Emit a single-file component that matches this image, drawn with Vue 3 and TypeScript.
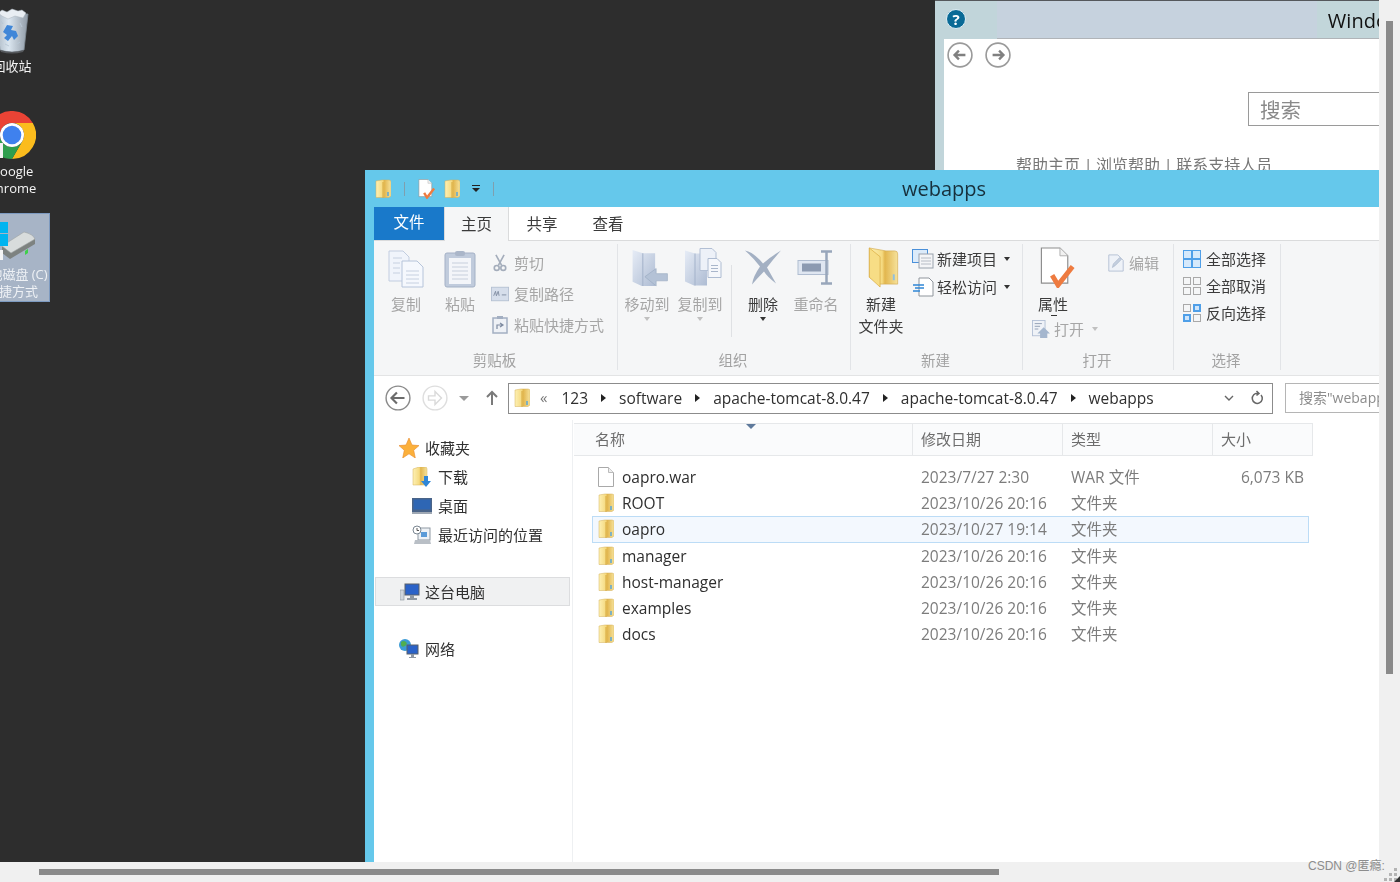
<script setup lang="ts">
interface FileRow {
  name: string
  icon: string
  date: string
  type: string
  size?: string
  selected?: boolean
}

const files: FileRow[] = [
  { name: 'oapro.war', icon: 'blank', date: '2023/7/27 2:30', type: 'WAR 文件', size: '6,073 KB' },
  { name: 'ROOT', icon: 'folder', date: '2023/10/26 20:16', type: '文件夹' },
  { name: 'oapro', icon: 'folder', date: '2023/10/27 19:14', type: '文件夹', selected: true },
  { name: 'manager', icon: 'folder', date: '2023/10/26 20:16', type: '文件夹' },
  { name: 'host-manager', icon: 'folder', date: '2023/10/26 20:16', type: '文件夹' },
  { name: 'examples', icon: 'folder', date: '2023/10/26 20:16', type: '文件夹' },
  { name: 'docs', icon: 'folder', date: '2023/10/26 20:16', type: '文件夹' },
]

const crumbs = ['123', 'software', 'apache-tomcat-8.0.47', 'apache-tomcat-8.0.47', 'webapps']
const favourites = [
  { label: '下载', icon: 'download' },
  { label: '桌面', icon: 'desktop' },
  { label: '最近访问的位置', icon: 'recent' },
]
const columns = ['名称', '修改日期', '类型', '大小']
</script>

<template>
  <div class="viewer">
    <svg class="sprites" width="0" height="0" aria-hidden="true">
      <defs>
        <linearGradient id="fold" x1="0" x2="1" y1="0" y2="0">
          <stop offset="0" stop-color="#fdf0b4" />
          <stop offset=".45" stop-color="#f5da80" />
          <stop offset=".55" stop-color="#e2b64e" />
          <stop offset="1" stop-color="#f6e29b" />
        </linearGradient>
        <linearGradient id="ghost" x1="0" x2="1" y1="0" y2="1">
          <stop offset="0" stop-color="#e6ecf6" />
          <stop offset="1" stop-color="#aebcd3" />
        </linearGradient>
        <linearGradient id="binbody" x1="0" x2="1" y1="0" y2="0">
          <stop offset="0" stop-color="#aab6c2" />
          <stop offset=".4" stop-color="#dbe6f0" />
          <stop offset="1" stop-color="#8f9aa6" />
        </linearGradient>
        <symbol id="folder" viewBox="0 0 16 20">
          <path d="M1 2 7 1h7q2 0 2 2v14l-2 1.500H1z" fill="url(#fold)" stroke="#d5b15a" stroke-width=".5" />
          <path d="M8 3v16" stroke="#d6a83f" stroke-width="1" />
          <path d="M13 13v4" stroke="#5aa7d8" stroke-width="1.500" />
        </symbol>
        <symbol id="blank" viewBox="0 0 16 20">
          <path d="M.5.5h10l5 5v14H.500z" fill="#fff" stroke="#a9a9a9" />
          <path d="M10.500.5v5h5" fill="#eee" stroke="#bbb" />
        </symbol>
        <symbol id="download" viewBox="0 0 18 20">
          <path d="M0 2 6 0h6q2 0 2 2v14l-2 2H0z" fill="url(#fold)" stroke="#d5b15a" stroke-width=".5" />
          <path d="M11 9h4v5h3l-5 6-5-6h3z" fill="#2f86d6" />
        </symbol>
        <symbol id="desktop" viewBox="0 0 20 20">
          <rect y="2" width="20" height="14" fill="#4a6488" />
          <rect x="1.500" y="3.500" width="17" height="10" fill="#2e66b4" />
          <rect y="16" width="20" height="2" fill="#9fa8b4" />
        </symbol>
        <symbol id="recent" viewBox="0 0 20 20">
          <rect x="6" y="3" width="12" height="12" fill="#eef2f6" stroke="#8f99a3" />
          <circle cx="5" cy="5" r="4" fill="#fff" stroke="#7b8792" />
          <path d="M5 3v2.500h2" stroke="#555" fill="none" />
          <rect x="9" y="7" width="6" height="5" fill="#5b9bd8" />
          <path d="M3 15h15l1 4H2z" fill="#b9bfc6" />
        </symbol>
        <symbol id="pc" viewBox="0 0 20 18">
          <rect x="0" y="7" width="4" height="10" fill="#d0d6dc" stroke="#8b949c" stroke-width=".6" />
          <rect x="5" y="1" width="14" height="11" fill="#2a62c8" stroke="#59606a" />
          <path d="M10 12h4v3h3v2H7v-2h3z" fill="#8f98a2" />
        </symbol>
        <symbol id="net" viewBox="0 0 20 20">
          <circle cx="6" cy="6" r="6" fill="#3c9bd6" />
          <path d="M2 3q3-2 5 0t-1 4-4-1zM8 9l3 1-1 2z" fill="#4fae50" />
          <rect x="8" y="6" width="11" height="9" fill="#2a62c8" stroke="#59606a" />
          <path d="M12 15h3v3h2v1h-7v-1h2z" fill="#8f98a2" />
        </symbol>
        <symbol id="copy" viewBox="0 0 36 38">
          <path d="M1 1h14l6 6v24H1z" fill="#f0f4fb" stroke="#c2cde0" />
          <path d="M14 11h15l6 6v20H14z" fill="#f5f8fd" stroke="#b6c4da" />
          <path d="M5 8h9M5 13h7M5 18h7M5 23h7M18 21h13M18 25h13M18 29h13M18 33h13" stroke="#c6d0e0" />
        </symbol>
        <symbol id="paste" viewBox="0 0 32 38">
          <rect x="1" y="3" width="30" height="34" rx="2" fill="#c0cbdc" stroke="#a4b1c6" />
          <rect x="5" y="8" width="22" height="26" fill="#f3f5f9" />
          <path d="M8 13h16M8 17h16M8 21h16M8 25h16M8 29h16" stroke="#c7cfdc" />
          <rect x="11" y="1" width="10" height="5" rx="2" fill="#aab6c9" />
        </symbol>
        <symbol id="cut" viewBox="0 0 16 22">
          <path d="M3 1l7 13M13 1 6 14" stroke="#a4adbb" stroke-width="2" fill="none" />
          <circle cx="4" cy="17" r="3" fill="none" stroke="#a4adbb" stroke-width="2" />
          <circle cx="12" cy="17" r="3" fill="none" stroke="#a4adbb" stroke-width="2" />
        </symbol>
        <symbol id="path" viewBox="0 0 20 16">
          <rect x=".5" y=".5" width="19" height="15" fill="#d6deeb" stroke="#b4c0d2" />
          <path d="M3 10l2-5 1 5 2-5 1 5M12 9h5" stroke="#7f8ba0" fill="none" />
        </symbol>
        <symbol id="short" viewBox="0 0 16 18">
          <rect x="1" y="2" width="14" height="15" fill="#eef1f6" stroke="#a3afc2" stroke-width="1.500" />
          <rect x="5" y="0" width="6" height="3" fill="#a3afc2" />
          <path d="M5 13V9h5M8 7l3 2-3 2" stroke="#7d8aa0" fill="none" stroke-width="1.200" />
        </symbol>
        <symbol id="move" viewBox="0 0 36 40">
          <path d="M1 3l10 3h12v32H10L1 34z" fill="url(#ghost)" />
          <path d="M11 6v32" stroke="#a3b2ca" />
          <path d="M35 26H24v-5L13 29l11 9v-5h11z" fill="#b4c2d6" stroke="#98a8c0" stroke-width=".6" />
        </symbol>
        <symbol id="copyto" viewBox="0 0 38 40">
          <path d="M1 3l10 3h12v32H10L1 34z" fill="url(#ghost)" />
          <path d="M11 6v32" stroke="#a3b2ca" />
          <path d="M16 1h12l4 4v18H16z" fill="#edf1f8" stroke="#b2bfd4" />
          <path d="M24 11h9l4 4v15H24z" fill="#f5f7fb" stroke="#aebcd2" />
          <path d="M27 18h7M27 21h7M27 24h7" stroke="#a9b6cb" />
        </symbol>
        <symbol id="del" viewBox="0 0 38 36">
          <path d="M1 1q9 2 18 13Q27 7 37 1 29 10 23 18q4 7 9 16-9-7-12-12Q14 28 8 35q1-8 8-18Q9 8 1 1z" fill="#a3b0c3" />
        </symbol>
        <symbol id="rename" viewBox="0 0 38 34">
          <rect x="1" y="10" width="30" height="14" fill="#dfe6f1" stroke="#b0bdd1" />
          <rect x="5" y="13" width="19" height="8" fill="#8c9ab1" />
          <path d="M24 1h11M24 33h11M29.500 1v32" stroke="#98a6bb" stroke-width="2.500" />
        </symbol>
        <symbol id="newfolder" viewBox="0 0 32 42">
          <path d="M1 1l17 3h9q3 0 3 3v31H12L1 31z" fill="url(#fold)" stroke="#d4ad52" stroke-width=".7" />
          <path d="M12 10 1 1v30l11 10z" fill="#f7dd85" stroke="#d9a93e" stroke-width=".7" />
          <path d="M26 28v6" stroke="#8fbfe0" stroke-width="2" />
        </symbol>
        <symbol id="newitem" viewBox="0 0 22 20">
          <rect x=".5" y=".5" width="15" height="13" fill="#dcebfa" stroke="#4a90d9" />
          <rect x="7" y="5" width="14" height="14" fill="#f4f5f7" stroke="#9aa2ad" />
          <path d="M9 9h10M9 12h10M9 15h10" stroke="#b6bcc5" />
        </symbol>
        <symbol id="easy" viewBox="0 0 22 20">
          <path d="M7 1h10l4 4v14H7z" fill="#fff" stroke="#8f959c" />
          <path d="M1 8h11M3 11h9M1 14h7" stroke="#2f86d6" stroke-width="1.600" />
        </symbol>
        <symbol id="props" viewBox="0 0 36 42">
          <path d="M1 1h19l8 8v28H1z" fill="#fff" stroke="#8e8e8e" stroke-width="1.200" />
          <path d="M20 1v8h8" fill="#f1f1f1" stroke="#b0b0b0" />
          <path d="M12 29l6 10L33 20" fill="none" stroke="#ee7b40" stroke-width="5" />
        </symbol>
        <symbol id="edit" viewBox="0 0 18 20">
          <path d="M1 1h10l6 6v12H1z" fill="#eef2f8" stroke="#b2bfd4" />
          <path d="M5 15l1-4 7-7 2 2-7 7z" fill="#c4cfdf" stroke="#a1afc5" stroke-width=".6" />
        </symbol>
        <symbol id="open" viewBox="0 0 20 20">
          <rect x=".5" y=".5" width="14" height="17" fill="#eff2f7" stroke="#b2bfd4" />
          <path d="M3 4h8M3 7h6M3 10h4" stroke="#8c9ab0" />
          <path d="M13 8l7 7h-3v5H9v-5H6z" fill="#a4b6ce" />
        </symbol>
      </defs>
    </svg>

    <main class="desktop">
      <div class="shortcut bin">
        <svg class="bin-ic" viewBox="0 0 34 46" width="34" height="46">
          <path d="M1 6h32l-4 36q-12 4-24 0z" fill="url(#binbody)" stroke="#7f8a94" stroke-width=".8" />
          <path d="M3 5l4-3 5 2 5-3 6 2 4-1 4 3-3 5-8-2-7 3-6-3z" fill="#e9eef3" stroke="#aab4bd" stroke-width=".5" />
          <path d="M8 24l4-7 6 1-2 4 5 1 2 5-4 4-2-4-4 5-4-3 3-3z" fill="#3f86d8" />
          <path d="M6 13l2 3M25 15l2 4M10 36l4 2M22 36l3-2" stroke="#b9c8d6" />
          <path d="M5 42q12 4 24 0l-1 2q-11 3-22 0z" fill="#55585c" />
        </svg>
        <span class="caption">回收站</span>
      </div>

      <div class="shortcut chrome">
        <svg viewBox="0 0 48 48" width="48" height="48">
          <path d="M3.200 12a24 24 0 0 1 41.600 0H24a12 12 0 0 0-10.400 18z" fill="#ea4335" />
          <path d="M44.800 12A24 24 0 0 1 24 48l10.400-18A12 12 0 0 0 24 12z" fill="#fbbc1d" />
          <path d="M24 48A24 24 0 0 1 3.200 12l10.400 18a12 12 0 0 0 20.800 0z" fill="#2f9e4e" />
          <circle cx="24" cy="24" r="12" fill="#fff" />
          <circle cx="24" cy="24" r="9.300" fill="#3f81ee" />
          <rect x="12" y="32" width="3" height="15" fill="#f2f2f2" />
        </svg>
        <span class="caption">Google<br />Chrome</span>
      </div>

      <div class="shortcut drive">
        <svg class="drive-ic" viewBox="0 0 62 40" width="62" height="40">
          <path d="M28 27 52 13l9 6v5L36 39l-8-6z" fill="#7d8280" />
          <path d="M28 26 50 12q9 2 11 7L37 33z" fill="#d8dcdc" stroke="#9da3a3" stroke-width=".6" />
          <path d="M51 31l3-2v4l-3 2z" fill="#3ed04a" />
          <rect x="26" y="2" width="8" height="11" fill="#00b4f0" />
          <rect x="26" y="14" width="8" height="12" fill="#00b4f0" />
          <rect x="26" y="30" width="3" height="10" fill="#f4f4f4" />
        </svg>
        <span class="caption">本地磁盘 (C)<br />快捷方式</span>
      </div>

      <section class="help">
        <header class="help-bar">
          <span class="help-q">?</span>
          <span class="help-title">Windows 帮助和支持</span>
        </header>
        <div class="help-body">
          <nav class="help-nav">
            <svg v-for="d in ['M17 12H7m4-4-4 4 4 4', 'M7 12h10m-4-4 4 4-4 4']" :key="d" viewBox="0 0 24 24" width="26" height="26">
              <circle cx="12" cy="12" r="11" fill="#fff" stroke="#9a9a9a" stroke-width="1.500" />
              <path :d="d" fill="none" stroke="#808080" stroke-width="2.200" />
            </svg>
          </nav>
          <div class="help-search">搜索</div>
          <p class="help-links">帮助主页 | 浏览帮助 | 联系支持人员</p>
        </div>
      </section>

      <section class="explorer">
        <header class="titlebar">
          <div class="quick">
            <svg class="ic-q"><use href="#folder" /></svg>
            <i class="q-sep"></i>
            <svg class="ic-q doc"><use href="#props" /></svg>
            <svg class="ic-q"><use href="#folder" /></svg>
            <span class="q-drop"></span>
            <i class="q-sep"></i>
          </div>
          <h1 class="title">webapps</h1>
        </header>

        <div class="pane">
          <div class="tabs">
            <span class="tab file">文件</span>
            <span class="tab active">主页</span>
            <span class="tab">共享</span>
            <span class="tab">查看</span>
          </div>

          <div class="ribbon">
            <div class="group g-clip">
              <div class="group-body">
                <div class="big off w44"><svg class="i36"><use href="#copy" /></svg><span>复制</span></div>
                <div class="big off w44"><svg class="i36"><use href="#paste" /></svg><span>粘贴</span></div>
                <div class="smalls off">
                  <div class="small"><svg class="i18"><use href="#cut" /></svg><span>剪切</span></div>
                  <div class="small"><svg class="i18"><use href="#path" /></svg><span>复制路径</span></div>
                  <div class="small"><svg class="i18"><use href="#short" /></svg><span>粘贴快捷方式</span></div>
                </div>
              </div>
              <div class="group-label">剪贴板</div>
            </div>

            <div class="group g-org">
              <div class="group-body">
                <div class="big off w50"><svg class="i40 nudge"><use href="#move" /></svg><span>移动到</span><b class="caret"></b></div>
                <div class="big off w50"><svg class="i40 nudge"><use href="#copyto" /></svg><span>复制到</span><b class="caret"></b></div>
                <i class="v-sep"></i>
                <div class="big w50 dark"><svg class="i40"><use href="#del" /></svg><span>删除</span><b class="caret on"></b></div>
                <div class="big off w50"><svg class="i40"><use href="#rename" /></svg><span>重命名</span></div>
              </div>
              <div class="group-label">组织</div>
            </div>

            <div class="group g-new">
              <div class="group-body">
                <div class="big w50 dark"><svg class="i40 nudge"><use href="#newfolder" /></svg><span>新建<br />文件夹</span></div>
                <div class="smalls tight">
                  <div class="small"><svg class="i22"><use href="#newitem" /></svg><span>新建项目</span><b class="caret on side"></b></div>
                  <div class="small"><svg class="i22"><use href="#easy" /></svg><span>轻松访问</span><b class="caret on side"></b></div>
                </div>
              </div>
              <div class="group-label">新建</div>
            </div>

            <div class="group g-open">
              <div class="group-body">
                <div class="open-left">
                  <div class="big w44 dark"><svg class="i40 nudge wide"><use href="#props" /></svg><span class="accel">属性</span></div>
                  <div class="small off"><svg class="i18"><use href="#open" /></svg><span>打开</span><b class="caret side"></b></div>
                </div>
                <div class="small off edit"><svg class="i18"><use href="#edit" /></svg><span>编辑</span></div>
              </div>
              <div class="group-label">打开</div>
            </div>

            <div class="group g-sel">
              <div class="selects">
                <div class="small"><span class="grid4 all"><i></i><i></i><i></i><i></i></span><span>全部选择</span></div>
                <div class="small"><span class="grid4 none"><i></i><i></i><i></i><i></i></span><span>全部取消</span></div>
                <div class="small"><span class="grid4 inv"><i></i><i></i><i></i><i></i></span><span>反向选择</span></div>
              </div>
              <div class="group-label">选择</div>
            </div>
          </div>

          <div class="addr-row">
            <svg viewBox="0 0 24 24" width="26" height="26">
              <circle cx="12" cy="12" r="11" fill="#fff" stroke="#8a8a8a" stroke-width="1.300" />
              <path d="M18 12H6m5-5-5 5 5 5" fill="none" stroke="#6c6c6c" stroke-width="2" />
            </svg>
            <svg class="fwd" viewBox="0 0 24 24" width="26" height="26">
              <circle cx="12" cy="12" r="11" fill="#fff" stroke="#dedede" stroke-width="1.300" />
              <path d="M6 10h6V6l6 6-6 6v-4H6z" fill="none" stroke="#dadada" stroke-width="1.300" />
            </svg>
            <span class="hist"></span>
            <svg class="up" viewBox="0 0 14 16" width="14" height="16"><path d="M7 15V2M2 7l5-5 5 5" fill="none" stroke="#7a7a7a" stroke-width="2" /></svg>
            <div class="addr">
              <svg class="addr-ic"><use href="#folder" /></svg>
              <span class="chev">«</span>
              <template v-for="(c, i) in crumbs" :key="i">
                <span class="crumb">{{ c }}</span>
                <span v-if="i < crumbs.length - 1" class="tri"></span>
              </template>
              <span class="addr-end">
                <svg viewBox="0 0 10 6" width="10" height="6"><path d="M1 1l4 4 4-4" fill="none" stroke="#666" stroke-width="1.400" /></svg>
                <svg viewBox="0 0 14 16" width="14" height="16"><path d="M11 5a5 5 0 1 1-3-1.600M6.500 1l2.500 2.400-2.500 2.100" fill="none" stroke="#666" stroke-width="1.500" /></svg>
              </span>
            </div>
            <div class="find">搜索"webapps"</div>
          </div>

          <div class="content">
            <aside class="tree">
              <div class="node fav">
                <svg viewBox="0 0 20 20" width="20" height="20"><path d="M10 0l3 7 7 .6-5.300 4.600L16.300 20 10 15.800 3.700 20l1.600-7.800L0 7.600 7 7z" fill="#fbb03b" stroke="#e8892c" stroke-width=".6" /></svg>
                <span>收藏夹</span>
              </div>
              <div v-for="f in favourites" :key="f.label" class="node sub">
                <svg class="i20"><use :href="`#${f.icon}`" /></svg>
                <span>{{ f.label }}</span>
              </div>
              <div class="node pc">
                <svg class="i20"><use href="#pc" /></svg>
                <span>这台电脑</span>
              </div>
              <div class="node net">
                <svg class="i20"><use href="#net" /></svg>
                <span>网络</span>
              </div>
            </aside>

            <div class="list">
              <div class="list-head">
                <span v-for="c in columns" :key="c" class="col-h">{{ c }}</span>
                <b class="sort"></b>
              </div>
              <div class="rows">
                <div v-for="f in files" :key="f.name" class="row" :class="{ selected: f.selected }">
                  <span class="name">
                    <svg class="file-ic"><use :href="`#${f.icon}`" /></svg>
                    {{ f.name }}
                  </span>
                  <span class="meta">{{ f.date }}</span>
                  <span class="meta">{{ f.type }}</span>
                  <span class="meta right">{{ f.size }}</span>
                </div>
              </div>
            </div>
          </div>
        </div>
      </section>
    </main>

    <div class="vbar"><i class="vthumb"></i></div>
    <div class="hbar"><i class="hthumb"></i></div>
    <div class="corner">
      <i v-for="n in 6" :key="n" :class="`dot d${n}`"></i>
      <i class="nib"></i>
    </div>
    <span class="mark">CSDN @匿瘾:</span>
  </div>
</template>

<style>
html,
body {
  margin: 0;
  overflow: hidden;
}
</style>

<style scoped>
.viewer {
  position: relative;
  width: 1400px;
  height: 882px;
  display: grid;
  grid-template-columns: 1379px 21px;
  grid-template-rows: 862px 20px;
  background: #f0f0f0;
  overflow: hidden;
  font-family: "Open Sans", "Noto Sans CJK SC", sans-serif;
  color: #3c3c3c;
}

.sprites {
  position: absolute;
}

.desktop {
  position: relative;
  background: #2d2d2d;
  overflow: hidden;
  filter: blur(0.35px);
}

/* desktop shortcuts */
.shortcut {
  position: absolute;
  left: -26px;
  width: 76px;
  display: flex;
  flex-direction: column;
  align-items: center;
  color: #f4f4f4;
  font-size: 13px;
  line-height: 17px;
}

.caption {
  text-align: center;
  white-space: nowrap;
}

.bin {
  top: 8px;
}

.bin-ic {
  margin-bottom: 4px;
}

.chrome {
  top: 111px;
}

.chrome .caption {
  margin-top: 4px;
}

.drive {
  top: 213px;
  height: 89px;
  box-sizing: border-box;
  background: #a7b4c6;
  border: 1px solid #7d9ac0;
  padding-top: 6px;
  color: #eef1f5;
}

.drive-ic {
  margin-left: -14px;
}

.drive .caption {
  margin-top: 6px;
}

/* help window behind */
.help {
  position: absolute;
  left: 935px;
  top: 0;
  width: 974px;
  height: 200px;
  background: #c1d5da;
  border-top: 1px solid #55585c;
  box-sizing: border-box;
}

.help-bar {
  position: relative;
  height: 37px;
  margin: 0 0 0 62px;
  background: linear-gradient(to right, #c6d2de 320px, #c2d6da 320px);
  display: flex;
  align-items: center;
  justify-content: center;
  border-bottom: 1px solid #b0b4b8;
  font-size: 20px;
  color: #111;
}

.help-q {
  position: absolute;
  left: -51px;
  top: 8px;
  width: 18px;
  height: 18px;
  border-radius: 50%;
  background: #0a6a96;
  border: 1px solid #dfeef5;
  color: #fff;
  font-weight: 700;
  font-size: 15px;
  line-height: 18px;
  text-align: center;
}

.help-title {
  margin-left: -60px;
}

.help-body {
  margin: 0 0 0 9px;
  height: 160px;
  background: #fff;
}

.help-nav {
  display: flex;
  gap: 12px;
  padding: 3px 0 0 3px;
}

.help-search {
  margin: 24px 0 0 304px;
  width: 400px;
  height: 34px;
  box-sizing: border-box;
  border: 1.500px solid #9a9a9a;
  padding-left: 11px;
  color: #8a8a8a;
  font-size: 20.500px;
  line-height: 35px;
}

.help-links {
  margin: 28px 0 0 72px;
  color: #777;
  font-size: 16px;
  line-height: 22px;
  word-spacing: -0.500px;
  white-space: nowrap;
}

/* explorer */
.explorer {
  position: absolute;
  left: 365px;
  top: 170px;
  width: 1158px;
  height: 692px;
  background: #65c8eb;
  display: flex;
  flex-direction: column;
}

.titlebar {
  position: relative;
  height: 37px;
  flex: none;
  display: flex;
  align-items: center;
  justify-content: center;
}

.title {
  margin: 0;
  font-size: 20px;
  font-weight: 400;
  color: #17303c;
}

.quick {
  position: absolute;
  left: 10px;
  top: 8px;
  display: flex;
  align-items: center;
  height: 21px;
}

.ic-q {
  width: 16px;
  height: 20px;
}

.ic-q.doc {
  width: 18px;
  margin-right: 8px;
}

.q-sep {
  width: 1px;
  height: 14px;
  background: #7f9fae;
  margin: 0 13px;
}

.q-drop {
  width: 8px;
  height: 6px;
  margin-left: 12px;
  border-top: 1.500px solid #222;
  position: relative;
}

.q-drop::after {
  content: "";
  position: absolute;
  left: 0;
  top: 2px;
  border: 4px solid transparent;
  border-top-color: #222;
  border-bottom: 0;
}

.pane {
  flex: 1;
  margin-left: 9px;
  background: #fff;
  display: flex;
  flex-direction: column;
  min-height: 0;
}

.tabs {
  display: flex;
  height: 34px;
  flex: none;
  box-sizing: border-box;
  border-bottom: 1px solid #dadbdc;
  font-size: 15.500px;
}

.tab {
  width: 66px;
  text-align: center;
  line-height: 34px;
  color: #3a3a3a;
}

.tab.file {
  width: 70px;
  height: 33px;
  line-height: 30px;
  background: #1979ca;
  color: #fff;
}

.tab.active {
  width: 65px;
  height: 34px;
  box-sizing: border-box;
  background: #f5f6f7;
  border: 1px solid #dadbdc;
  border-width: 0 1px;
}

.ribbon {
  height: 135px;
  flex: none;
  display: flex;
  box-sizing: border-box;
  background: #f5f6f7;
  border-bottom: 1px solid #e3e4e5;
  font-size: 15px;
  line-height: 22px;
}

.group {
  display: flex;
  flex-direction: column;
  box-sizing: border-box;
  border-right: 1px solid #e2e4e7;
  margin: 3px 0 5px;
}

.group-body {
  flex: 1;
  display: flex;
  min-height: 0;
}

.group-label {
  height: 20px;
  text-align: center;
  color: #a2a2a2;
  font-size: 14.500px;
  margin-left: -2px;
}

.g-clip {
  width: 244px;
}

.g-clip .group-body {
  padding: 4px 0 0 10px;
  gap: 10px;
}

.g-clip .small {
  gap: 5px;
}

.g-org {
  width: 233px;
}

.g-org .group-body {
  padding: 3px 0 0 4px;
  gap: 3px;
}

.g-new {
  width: 172px;
}

.g-new .group-body {
  padding: 3px 0 0 5px;
}

.g-open {
  width: 151px;
}

.g-open .group-body {
  padding: 3px 0 0 8px;
}

.g-sel {
  width: 107px;
}

.big {
  position: relative;
  display: flex;
  flex-direction: column;
  align-items: center;
  text-align: center;
  flex: none;
}

.big span {
  margin-top: 5px;
}

.w44 {
  width: 44px;
}

.w50 {
  width: 50px;
}

.off {
  color: #a6a6a6;
}

.dark {
  color: #3c3c3c;
}

.i18 {
  width: 18px;
  height: 18px;
  flex: none;
}

.i20 {
  width: 20px;
  height: 20px;
  flex: none;
}

.i22 {
  width: 22px;
  height: 20px;
  flex: none;
}

.i36 {
  width: 38px;
  height: 38px;
  margin-top: 2px;
}

.i40 {
  width: 38px;
  height: 41px;
}

.nudge {
  margin-left: 6px;
}

.nudge.wide {
  margin-left: 10px;
}

.accel {
  position: relative;
}

.accel::after {
  content: "";
  position: absolute;
  left: 13px;
  bottom: -1px;
  width: 6px;
  height: 1px;
  background: #333;
}

.smalls {
  display: flex;
  flex-direction: column;
  gap: 9px;
  padding-top: 4px;
  margin-left: -1px;
}

.smalls.tight {
  gap: 6px;
  padding-top: 1px;
  margin-left: 6px;
}

.smalls.tight .small {
  gap: 3px;
}

.small {
  display: flex;
  align-items: center;
  gap: 4px;
  white-space: nowrap;
}

.caret {
  display: block;
  width: 0;
  height: 0;
  margin-top: 2px;
  border: 3px solid transparent;
  border-top: 4px solid #c0c0c0;
  border-bottom: 0;
}

.caret.on {
  border-top-color: #333;
}

.caret.side {
  margin: 0 0 0 4px;
}

.v-sep {
  width: 1px;
  height: 72px;
  margin: 18px 3px 0;
  background: #dfe1e4;
  flex: none;
}

.open-left {
  display: flex;
  flex-direction: column;
  width: 76px;
  flex: none;
}

.open-left .small {
  margin: 3px 0 0 1px;
}

.edit {
  align-self: flex-start;
  margin: 5px 0 0 0;
}

.selects {
  flex: 1;
  display: flex;
  flex-direction: column;
  gap: 5px;
  padding: 4px 0 0 9px;
}

.grid4 {
  display: grid;
  grid-template-columns: 8px 8px;
  gap: 2px;
  width: 18px;
  margin-right: 1px;
  flex: none;
}

.grid4 i {
  height: 8px;
  box-sizing: border-box;
}

.all {
  background: #4f9fe8;
  padding: 1px;
  box-sizing: border-box;
  grid-template-columns: 7px 7px;
}

.all i {
  height: 7px;
  background: #d6e9fb;
}

.none i {
  border: 1px solid #a9a9a9;
}

.inv i:nth-child(1),
.inv i:nth-child(4) {
  border: 1px solid #a9a9a9;
}

.inv i:nth-child(2),
.inv i:nth-child(3) {
  background: #cfe5fa;
  border: 2px solid #4f9fe8;
}

/* address row */
.addr-row {
  height: 44px;
  flex: none;
  display: flex;
  align-items: center;
  box-sizing: border-box;
  padding: 0 0 0 11px;
}

.fwd {
  margin-left: 11px;
}

.hist {
  width: 0;
  height: 0;
  margin: 0 16px 0 11px;
  border: 5px solid transparent;
  border-top: 5px solid #9a9a9a;
  border-bottom: 0;
}

.up {
  margin-right: 9px;
}

.addr {
  width: 765px;
  height: 31px;
  flex: none;
  box-sizing: border-box;
  border: 1.500px solid #8c8c8c;
  display: flex;
  align-items: center;
  padding-left: 5px;
  font-size: 15.500px;
  color: #2f2f2f;
  white-space: nowrap;
}

.addr-ic {
  width: 16px;
  height: 20px;
}

.chev {
  margin: -2px 14px 0 10px;
  color: #777;
  font-size: 15px;
}

.crumb {
  flex: none;
}

.crumb:last-of-type {
  margin-left: 1px;
  font-size: 16px;
}

.tri {
  width: 0;
  height: 0;
  margin: 0 13px;
  border: 4px solid transparent;
  border-left: 5px solid #222;
  border-right: 0;
  flex: none;
}

.addr-end {
  margin-left: auto;
  display: flex;
  align-items: center;
  gap: 16px;
  padding-right: 8px;
}

.find {
  margin: 0 10px 0 12px;
  flex: 1;
  height: 30px;
  box-sizing: border-box;
  border: 1px solid #b5b5b5;
  padding-left: 13px;
  color: #8c8c8c;
  font-size: 14px;
  line-height: 28px;
  white-space: nowrap;
}

/* nav pane and list */
.content {
  flex: 1;
  display: flex;
  min-height: 0;
}

.tree {
  width: 199px;
  flex: none;
  box-sizing: border-box;
  border-right: 1px solid #eef0f2;
  padding-top: 13px;
  font-size: 15px;
  color: #303030;
}

.node {
  display: flex;
  align-items: center;
  height: 29px;
  gap: 6px;
  white-space: nowrap;
}

.fav {
  padding-left: 25px;
}

.sub {
  padding-left: 38px;
}

.node.pc {
  margin: 28px 2px 0 1px;
  padding-left: 24px;
  height: 29px;
  background: #f0f1f2;
  box-sizing: border-box;
  border: 1px solid #dcdddf;
  gap: 5px;
}

.node.net {
  margin-top: 28px;
  padding-left: 25px;
}

.list {
  flex: 1;
  min-width: 0;
  padding: 3px 0 0 1px;
}

.list-head {
  position: relative;
  display: grid;
  grid-template-columns: 339px 150px 150px 100px;
  width: 739px;
  height: 33px;
  box-sizing: border-box;
  border: 1px solid #e6e8ea;
  border-width: 1px 0 1px;
  background: #fafbfc;
  font-size: 15px;
  color: #6d6d6d;
}

.col-h {
  padding-left: 8px;
  line-height: 31px;
  border-right: 1px solid #e6e8ea;
}

.col-h:first-child {
  padding-left: 21px;
}

.sort {
  position: absolute;
  left: 172px;
  top: 0;
  border: 5px solid transparent;
  border-top: 5px solid #5f7a9c;
  border-bottom: 0;
}

.rows {
  display: flex;
  flex-direction: column;
  padding: 8px 0 0 18px;
  width: 716px;
}

.row {
  display: grid;
  grid-template-columns: 321px 150px 150px 95px;
  height: 26.200px;
  box-sizing: border-box;
  align-items: center;
  font-size: 15.500px;
  line-height: 20px;
  border: 1px solid transparent;
  color: #2f2f2f;
  margin-right: -1px;
}

.row.selected {
  background: #f3f8fe;
  border-color: #bcdcf6;
}

.name {
  display: flex;
  align-items: center;
  gap: 8px;
  padding-left: 5px;
  white-space: nowrap;
}

.file-ic {
  width: 16px;
  height: 20px;
  flex: none;
}

.meta {
  padding-left: 7px;
  font-size: 15.500px;
  color: #7c7c7c;
  white-space: nowrap;
}

.meta.right {
  text-align: right;
  padding: 0 5px 0 0;
}

/* viewer chrome */
.vbar {
  grid-column: 2;
  grid-row: 1;
  padding: 21px 0 0 7px;
}

.vthumb {
  display: block;
  width: 7px;
  height: 653px;
  background: #8a8a8a;
}

.hbar {
  grid-column: 1;
  grid-row: 2;
  padding: 7px 0 0 39px;
}

.hthumb {
  display: block;
  width: 960px;
  height: 6px;
  background: #8a8a8a;
}

.corner {
  position: relative;
}

.dot {
  position: absolute;
  width: 3px;
  height: 3px;
  background: #b4b4b4;
}

.d1 { left: 15px; top: 6px; }
.d2 { left: 10px; top: 11px; }
.d3 { left: 15px; top: 11px; }
.d4 { left: 5px; top: 16px; }
.d5 { left: 10px; top: 16px; }
.d6 { left: 15px; top: 16px; }

.nib {
  position: absolute;
  right: 0;
  bottom: 0;
  border: 3px solid transparent;
  border-right-color: #333;
  border-bottom-color: #333;
}

.mark {
  position: absolute;
  left: 1308px;
  top: 858px;
  font-family: "Liberation Sans", "Noto Sans CJK SC", sans-serif;
  font-size: 12px;
  line-height: 16px;
  color: #8d8d8d;
  white-space: nowrap;
}
</style>
